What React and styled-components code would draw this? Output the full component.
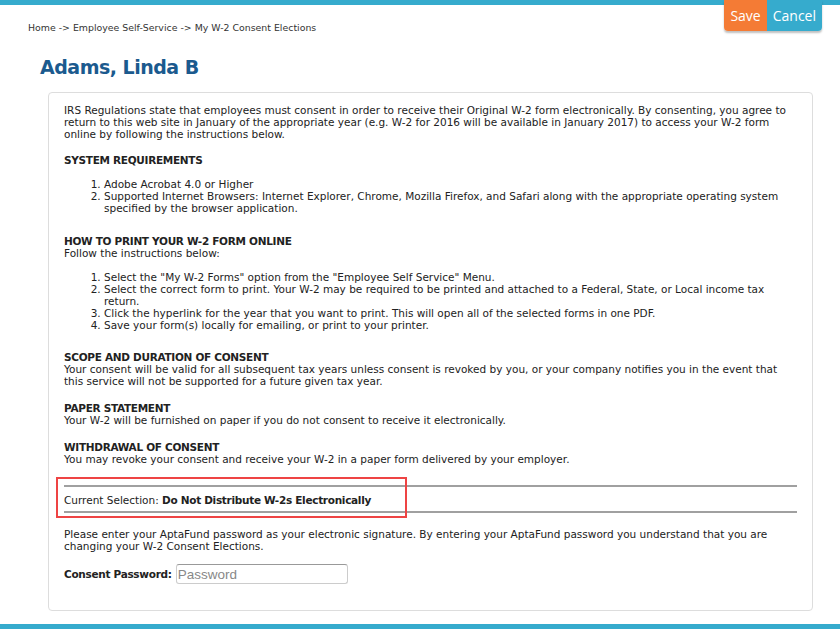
import styled, { createGlobalStyle } from "styled-components"

const GlobalStyle = createGlobalStyle`
  html, body {
    margin: 0;
    padding: 0;
    background: #fff;
  }
  body {
    font-family: "DejaVu Sans", Verdana, sans-serif;
    color: #222;
  }
`

const Page = styled.div`
  position: relative;
  width: 840px;
  height: 629px;
  overflow: hidden;
  display: flex;
  flex-direction: column;
`
const TopBar = styled.div`
  height: 5px;
  background: #36abcd;
`
const BottomBar = styled.div`
  height: 5px;
  margin-top: auto;
  background: #36abcd;
`
const Actions = styled.div`
  position: absolute;
  top: 0;
  right: 18px;
  display: flex;
  border-radius: 0 0 4px 4px;
  overflow: hidden;
  box-shadow: 0 2px 2px rgba(0, 0, 0, 0.25);
`
const ActionButton = styled.button`
  border: none;
  height: 31px;
  padding: 0 6px;
  font-family: "Open Sans", sans-serif;
  font-size: 14px;
  color: #fff;
  background: ${(p) => (p.$primary ? "#f47b35" : "#36abcd")};
  cursor: pointer;
`
const Breadcrumb = styled.div`
  margin: 17px 0 0 28px;
  font-size: 9.4px;
  line-height: 12px;
  color: #333;
`
const Title = styled.h1`
  margin: 20px 0 0 40px;
  font-size: 19px;
  letter-spacing: -0.5px;
  line-height: 26px;
  color: #1b5a8e;
  font-weight: bold;
`
const Panel = styled.div`
  margin: 12px 27px 0 48px;
  border: 1px solid #ddd;
  border-radius: 4px;
  height: 519px;
  box-sizing: border-box;
  padding: 11px 15px 0 15px;
  font-size: 10.5px;
  line-height: 12px;
  b {
    font-weight: bold;
    letter-spacing: -0.3px;
  }
`
const Para = styled.p`
  margin: 0 0 ${(p) => p.$gap ?? 15}px 0;
`
const Heading = styled.div`
  font-weight: bold;
  letter-spacing: -0.3px;
`
const List = styled.ol`
  margin: 12px 0 ${(p) => p.$gap ?? 21}px 0;
  padding-left: 40px;
`
const Rule = styled.hr`
  border: none;
  border-top: 2px solid #a0a0a0;
  margin: 0;
`
const SelectionBox = styled.div`
  position: relative;
  margin: 0 0 15px 0;
`
const SelectionRow = styled.div`
  padding: 7px 0 5px 0;
`
const RedFrame = styled.div`
  position: absolute;
  left: -8px;
  top: -8px;
  width: 351px;
  height: 41px;
  box-sizing: border-box;
  border: 2px solid #ee4444;
`
const FieldRow = styled.div`
  display: flex;
  align-items: center;
  gap: 4px;
  margin-top: 12px;
`
const Label = styled.label`
  font-weight: bold;
  font-size: 10.5px;
  letter-spacing: -0.3px;
`
const Input = styled.input`
  width: 172px;
  height: 20px;
  box-sizing: border-box;
  border: 1px solid #ccc;
  border-top-color: #999;
  border-radius: 3px;
  padding: 0 1px;
  font-family: "Liberation Sans", Arial, sans-serif;
  font-size: 13.5px;
  &::placeholder {
    color: #888;
  }
`

export default function App() {
  return (
    <Page>
      <GlobalStyle />
      <TopBar />
      <Actions>
        <ActionButton $primary>Save</ActionButton>
        <ActionButton>Cancel</ActionButton>
      </Actions>
      <Breadcrumb>Home -&gt; Employee Self-Service -&gt; My W-2 Consent Elections</Breadcrumb>
      <Title>Adams, Linda B</Title>
      <Panel>
        <Para $gap={14}>
          IRS Regulations state that employees must consent in order to receive their Original W-2 form electronically. By consenting, you agree to return to this web site in January of the appropriate year (e.g. W-2 for 2016 will be available in January 2017) to access your W-2 form online by following the instructions below.
        </Para>
        <Heading>SYSTEM REQUIREMENTS</Heading>
        <List>
          <li>Adobe Acrobat 4.0 or Higher</li>
          <li>Supported Internet Browsers: Internet Explorer, Chrome, Mozilla Firefox, and Safari along with the appropriate operating system specified by the browser application.</li>
        </List>
        <Heading>HOW TO PRINT YOUR W-2 FORM ONLINE</Heading>
        <div>Follow the instructions below:</div>
        <List $gap={20}>
          <li>Select the "My W-2 Forms" option from the "Employee Self Service" Menu.</li>
          <li>Select the correct form to print. Your W-2 may be required to be printed and attached to a Federal, State, or Local income tax return.</li>
          <li>Click the hyperlink for the year that you want to print. This will open all of the selected forms in one PDF.</li>
          <li>Save your form(s) locally for emailing, or print to your printer.</li>
        </List>
        <Heading>SCOPE AND DURATION OF CONSENT</Heading>
        <Para>
          Your consent will be valid for all subsequent tax years unless consent is revoked by you, or your company notifies you in the event that this service will not be supported for a future given tax year.
        </Para>
        <Heading>PAPER STATEMENT</Heading>
        <Para>Your W-2 will be furnished on paper if you do not consent to receive it electronically.</Para>
        <Heading>WITHDRAWAL OF CONSENT</Heading>
        <Para $gap={20}>You may revoke your consent and receive your W-2 in a paper form delivered by your employer.</Para>
        <SelectionBox>
          <Rule />
          <SelectionRow>
            Current Selection: <b>Do Not Distribute W-2s Electronically</b>
          </SelectionRow>
          <Rule />
          <RedFrame />
        </SelectionBox>
        <Para $gap={0}>
          Please enter your AptaFund password as your electronic signature. By entering your AptaFund password you understand that you are changing your W-2 Consent Elections.
        </Para>
        <FieldRow>
          <Label>Consent Password:</Label>
          <Input type="password" placeholder="Password" />
        </FieldRow>
      </Panel>
      <BottomBar />
    </Page>
  )
}
